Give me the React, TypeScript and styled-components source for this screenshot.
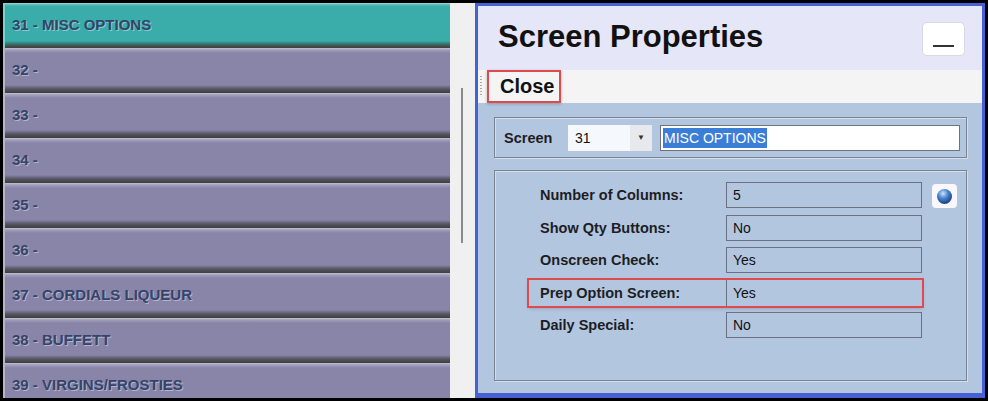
import React from 'react';
import styled, { createGlobalStyle } from 'styled-components';

type rowType = {
  id: number;
  name: string;
};

const rows: rowType[] = [
  { id: 31, name: 'MISC OPTIONS' },
  { id: 32, name: '' },
  { id: 33, name: '' },
  { id: 34, name: '' },
  { id: 35, name: '' },
  { id: 36, name: '' },
  { id: 37, name: 'CORDIALS LIQUEUR' },
  { id: 38, name: 'BUFFETT' },
  { id: 39, name: 'VIRGINS/FROSTIES' },
];

const props = [
  { label: 'Number of Columns:', value: '5', orb: true },
  { label: 'Show Qty Buttons:', value: 'No' },
  { label: 'Onscreen Check:', value: 'Yes' },
  { label: 'Prep Option Screen:', value: 'Yes', marked: true },
  { label: 'Daily Special:', value: 'No' },
];

const GlobalStyle = createGlobalStyle`
  html, body {
    margin: 0;
    padding: 0;
    background: #000;
  }
  body {
    font-family: "Liberation Sans", Arial, sans-serif;
  }
`;

const Frame = styled.div`
  width: 988px;
  height: 401px;
  box-sizing: border-box;
  padding: 3px;
  background: #000;
  display: flex;
  overflow: hidden;
`;

const List = styled.div`
  width: 447px;
  height: 395px;
  display: flex;
  flex-direction: column;
  overflow: hidden;
  flex-shrink: 0;
`;

const RowButton = styled.div<{ $active?: boolean }>`
  height: 45px;
  flex-shrink: 0;
  box-sizing: border-box;
  display: flex;
  align-items: center;
  padding: 0 0 2px 7px;
  font-size: 15px;
  font-weight: bold;
  color: #34446a;
  text-shadow: 1px 1px 0 rgba(235, 240, 250, 0.45);
  border-left: 2px solid ${(p) => (p.$active ? '#7fd0cc' : '#b7b5c9')};
  background: ${(p) =>
    p.$active
      ? 'linear-gradient(to bottom, #9fdcd8 0, #52b8b4 2px, #3aadaa 4px, #3aadaa 38px, #2d8a87 40px, #4a5a58 42px, #3e3e3e 45px)'
      : 'linear-gradient(to bottom, #c3c1d2 0, #a19ebc 2px, #8885a9 5px, #8885a9 37px, #6e6c86 39px, #555560 41px, #3e3e3e 45px)'};
`;

const Gutter = styled.div`
  width: 25px;
  height: 395px;
  flex-shrink: 0;
  background: #f0f0f0;
  box-sizing: border-box;
  padding: 85px 0 0 11px;
`;

const ScrollThumb = styled.div`
  width: 2px;
  height: 155px;
  background: #8a8a8a;
`;

const Window = styled.div`
  width: 510px;
  height: 395px;
  flex-shrink: 0;
  box-sizing: border-box;
  border: 3px solid #4660d6;
  border-bottom-width: 5px;
  display: flex;
  flex-direction: column;
  background: #b3c6df;
`;

const TitleBar = styled.div`
  height: 64px;
  flex-shrink: 0;
  background: #e6e6f9;
  display: flex;
  align-items: center;
  justify-content: space-between;
  padding: 0 17px 0 20px;
`;

const Title = styled.h1`
  margin: 0;
  padding-bottom: 2px;
  font-size: 31px;
  font-weight: bold;
  color: #111;
`;

const MinButton = styled.div`
  width: 43px;
  height: 34px;
  margin-top: 2px;
  background: #fff;
  border-radius: 5px;
  border: 1px solid #d8d8e4;
  box-sizing: border-box;
  display: flex;
  align-items: flex-end;
  justify-content: center;
  padding-bottom: 8px;
`;

const MinBar = styled.div`
  width: 21px;
  height: 2px;
  background: #333;
`;

const Toolbar = styled.div`
  height: 33px;
  flex-shrink: 0;
  background: #f4f4f4;
  display: flex;
  align-items: stretch;
  padding-left: 2px;
  gap: 5px;
`;

const Grip = styled.div`
  width: 2px;
  margin: 6px 0;
  background: repeating-linear-gradient(to bottom, #a8a8a8 0 1px, transparent 1px 3px);
`;

const CloseButton = styled.div`
  width: 74px;
  box-sizing: border-box;
  border: 2px solid #e04a4f;
  box-shadow: 0 1px 3px rgba(0, 0, 0, 0.25);
  display: flex;
  align-items: center;
  padding-left: 11px;
  font-size: 20px;
  font-weight: bold;
  color: #111;
`;

const Body = styled.div`
  flex: 1;
  padding: 14px 15px 0 16px;
  display: flex;
  flex-direction: column;
  gap: 12px;
`;

const Group = styled.div<{ $h: number }>`
  height: ${(p) => p.$h}px;
  box-sizing: border-box;
  border: 1px solid #7c8492;
  box-shadow: inset 1px 1px 0 #d3deec, 1px 1px 0 #d3deec;
`;

const ScreenRow = styled.div`
  display: flex;
  align-items: center;
  height: 100%;
  padding-left: 9px;
`;

const Label = styled.span<{ $w: number }>`
  width: ${(p) => p.$w}px;
  flex-shrink: 0;
  font-size: 14.5px;
  font-weight: bold;
  color: #1d1d24;
`;

const Combo = styled.div`
  width: 84px;
  height: 26px;
  display: flex;
  background: #f5f9fd;
  font-size: 14px;
  color: #111;
`;

const ComboText = styled.span`
  flex: 1;
  padding-left: 7px;
  line-height: 26px;
`;

const ComboArrow = styled.span`
  width: 22px;
  background: #e8e9ec;
  display: flex;
  align-items: center;
  justify-content: center;
  font-size: 8px;
  color: #333;
`;

const NameInput = styled.div`
  margin-left: 8px;
  width: 300px;
  height: 26px;
  box-sizing: border-box;
  border: 1px solid #6f747c;
  background: #fff;
  padding: 2px 2px;
  font-size: 14px;
  display: flex;
  align-items: center;
`;

const Selected = styled.span`
  background: #3b7ed8;
  color: #fff;
  padding: 2px 1px;
`;

const PropList = styled.div`
  display: flex;
  flex-direction: column;
  gap: 6.5px;
  padding: 11px 0 0 34px;
`;

const PropRow = styled.div<{ $marked?: boolean }>`
  width: 393px;
  height: 26px;
  box-sizing: border-box;
  display: flex;
  align-items: center;
  padding-left: 11px;
  position: relative;
  outline: ${(p) => (p.$marked ? '2px solid #e04a4f' : 'none')};
  box-shadow: ${(p) => (p.$marked ? '0 2px 4px rgba(0,0,0,0.25)' : 'none')};
`;

const ValueBox = styled.div<{ $marked?: boolean }>`
  width: 196px;
  height: 26px;
  box-sizing: border-box;
  border: 1px solid #6b7180;
  ${(p) => (p.$marked ? 'border-top: none; border-right: none; border-bottom: none;' : '')}
  padding-left: 6px;
  font-size: 14px;
  color: #111;
  display: flex;
  align-items: center;
`;

const Orb = styled.div`
  position: absolute;
  left: 403px;
  top: 2px;
  width: 25px;
  height: 24px;
  border-radius: 4px;
  background: #f8f8fb;
  display: flex;
  align-items: center;
  justify-content: center;
`;

const OrbBall = styled.div`
  width: 15px;
  height: 15px;
  border-radius: 50%;
  background: radial-gradient(circle at 40% 30%, #cfe4ff 0, #4d86d0 35%, #1a4a90 70%, #0d2c5c 100%);
`;

const App = () => {
  return (
    <Frame>
      <GlobalStyle />
      <List>
        {rows.map((r, i) => (
          <RowButton key={r.id} $active={i === 0}>
            {r.id} -{r.name ? ' ' + r.name : ''}
          </RowButton>
        ))}
      </List>
      <Gutter>
        <ScrollThumb />
      </Gutter>
      <Window>
        <TitleBar>
          <Title>Screen Properties</Title>
          <MinButton>
            <MinBar />
          </MinButton>
        </TitleBar>
        <Toolbar>
          <Grip />
          <CloseButton>Close</CloseButton>
        </Toolbar>
        <Body>
          <Group $h={41}>
            <ScreenRow>
              <Label $w={64}>Screen</Label>
              <Combo>
                <ComboText>31</ComboText>
                <ComboArrow>▼</ComboArrow>
              </Combo>
              <NameInput>
                <Selected>MISC OPTIONS</Selected>
              </NameInput>
            </ScreenRow>
          </Group>
          <Group $h={211}>
            <PropList>
              {props.map((p) => (
                <PropRow key={p.label} $marked={p.marked}>
                  <Label $w={186}>{p.label}</Label>
                  <ValueBox $marked={p.marked}>{p.value}</ValueBox>
                  {p.orb && (
                    <Orb>
                      <OrbBall />
                    </Orb>
                  )}
                </PropRow>
              ))}
            </PropList>
          </Group>
        </Body>
      </Window>
    </Frame>
  );
};

export default App;
